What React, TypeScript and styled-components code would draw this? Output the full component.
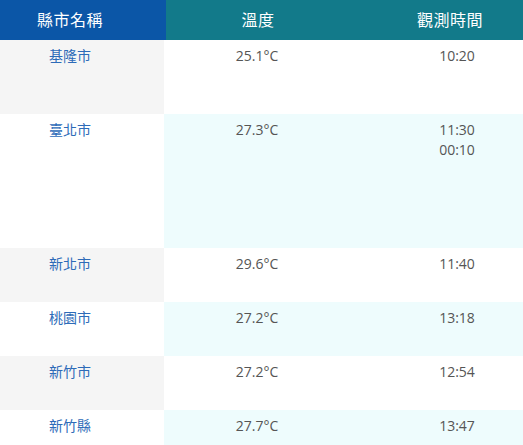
import styled, { createGlobalStyle } from "styled-components";

interface Reading {
  city: string;
  temp: string;
  times: string[];
  height: number;
}

interface CellStyle {
  $shade?: boolean;
}

const GlobalStyle = createGlobalStyle`
  body {
    margin: 0;
    background: #ffffff;
    font-family: "Open Sans", "Noto Sans CJK TC", sans-serif;
  }
`;

const Table = styled.div`
  width: 523px;
  display: flex;
  flex-direction: column;
`;

const HeadRow = styled.div`
  display: flex;
  height: 40px;
  background-color: #127a8a;
`;

const HeadCell = styled.div`
  display: flex;
  align-items: center;
  justify-content: center;
  box-sizing: border-box;
  height: 40px;
  padding-bottom: 3px;
  color: #ffffff;
  font-size: 16px;
  letter-spacing: 0.5px;
`;

const HeadCity = styled(HeadCell)`
  width: 166px;
  padding-right: 26px;
  background-color: #0b56a7;
`;

const HeadTemp = styled(HeadCell)`
  width: 184px;
`;

const HeadTime = styled(HeadCell)`
  flex: 1;
  padding-left: 27px;
`;

const Row = styled.div`
  display: flex;
`;

const Cell = styled.div`
  box-sizing: border-box;
  padding-top: 6px;
  font-size: 14px;
  line-height: 20px;
  text-align: center;
  color: #555555;
`;

const CityCell = styled(Cell)<CellStyle>`
  width: 164px;
  padding-right: 24px;
  color: #2d6bb8;
  background-color: ${({ $shade }) => ($shade ? "#f5f5f5" : "#ffffff")};
`;

const TempCell = styled(Cell)<CellStyle>`
  width: 186px;
  background-color: ${({ $shade }) => ($shade ? "#eefcfd" : "#ffffff")};
`;

const TimeCell = styled(Cell)<CellStyle>`
  flex: 1;
  padding-left: 41px;
  background-color: ${({ $shade }) => ($shade ? "#eefcfd" : "#ffffff")};
`;

const readings: Reading[] = [
  { city: "基隆市", temp: "25.1°C", times: ["10:20"], height: 74 },
  { city: "臺北市", temp: "27.3°C", times: ["11:30", "00:10"], height: 134 },
  { city: "新北市", temp: "29.6°C", times: ["11:40"], height: 54 },
  { city: "桃園市", temp: "27.2°C", times: ["13:18"], height: 54 },
  { city: "新竹市", temp: "27.2°C", times: ["12:54"], height: 54 },
  { city: "新竹縣", temp: "27.7°C", times: ["13:47"], height: 54 },
];

const App = () => {
  return (
    <>
      <GlobalStyle />
      <Table>
        <HeadRow>
          <HeadCity>縣市名稱</HeadCity>
          <HeadTemp>溫度</HeadTemp>
          <HeadTime>觀測時間</HeadTime>
        </HeadRow>
        {readings.map((r, i) => {
          const odd = i % 2 === 1;
          return (
            <Row key={r.city} style={{ height: r.height }}>
              <CityCell $shade={!odd}>{r.city}</CityCell>
              <TempCell $shade={odd}>{r.temp}</TempCell>
              <TimeCell $shade={odd}>
                {r.times.map((t) => (
                  <div key={t}>{t}</div>
                ))}
              </TimeCell>
            </Row>
          );
        })}
      </Table>
    </>
  );
};

export default App;
